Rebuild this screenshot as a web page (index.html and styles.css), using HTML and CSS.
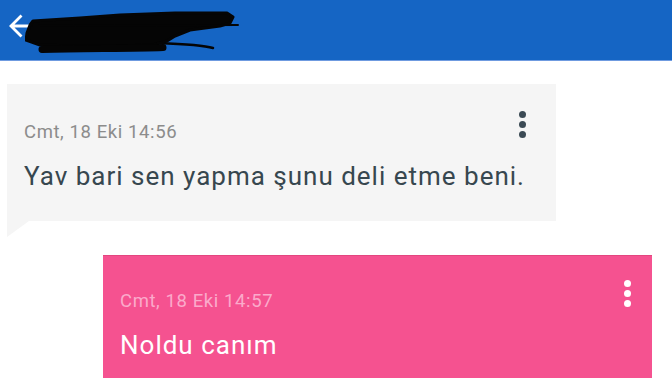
FILE: index.html
```html
<!DOCTYPE html>
<html>
<head>
<meta charset="utf-8">
<link rel="stylesheet" href="styles.css">
</head>
<body>
<header class="topbar">
  <svg class="back" width="28" height="28" viewBox="0 0 28 28"><path d="M27 14H4M14.5 3.5L4 14l10.5 10.5" fill="none" stroke="#fff" stroke-width="2.8"/></svg>
  <svg class="redact" width="215" height="50" viewBox="0 0 215 50">
    <path d="M8 13 L55 10 L95 7 L150 5 L202 5 L208 9 L205 15 L195 18 L165 22 L150 28 L142 33 L128 37 L90 38 L50 38 L15 37 L1 32 L2 25 L5 17 Z" fill="#050505" stroke="#050505" stroke-width="3" stroke-linejoin="round"/>
    <path d="M8 18 L213 17" fill="none" stroke="#050505" stroke-width="2" stroke-linecap="round"/>
    <path d="M17 41.5 C60 40.5 110 40.5 138 39.5" fill="none" stroke="#050505" stroke-width="7" stroke-linecap="round"/>
    <path d="M133 35 C160 36 178 37 188 40" fill="none" stroke="#050505" stroke-width="2.5" stroke-linecap="round"/>
  </svg>
</header>
<main class="chat">
  <div class="msg incoming">
    <div class="bubble">
      <div class="body">
        <div class="time">Cmt, 18 Eki 14:56</div>
        <div class="text">Yav bari sen yapma şunu deli etme beni.</div>
      </div>
      <div class="dots"><span></span><span></span><span></span></div>
    </div>
    <div class="tail"></div>
  </div>
  <div class="msg outgoing">
    <div class="bubble">
      <div class="body">
        <div class="time">Cmt, 18 Eki 14:57</div>
        <div class="text">Noldu canım</div>
      </div>
      <div class="dots"><span></span><span></span><span></span></div>
    </div>
  </div>
</main>
</body>
</html>
```
FILE: styles.css
```css
html, body { margin: 0; padding: 0; }
body {
  width: 672px; height: 378px; overflow: hidden;
  background: #fff;
  font-family: Roboto, "Noto Sans", sans-serif;
}
.topbar {
  height: 61px;
  background: #1565c4;
  border-bottom: 1px solid #6f9be0;
  display: flex; align-items: flex-start;
  padding-left: 7px;
  box-sizing: border-box;
}
.back { margin-top: 12px; }
.redact { margin-left: -10px; margin-top: 8px; }
.chat { display: flex; flex-direction: column; padding-top: 23px; }
.msg { width: 549px; }
.incoming { margin-left: 7px; }
.outgoing { margin-left: 103px; margin-top: 18px; }
.bubble {
  display: flex; justify-content: space-between;
  box-sizing: border-box;
}
.incoming .bubble { background: #f5f5f5; height: 137px; padding: 27px 30px 0 17px; }
.outgoing .bubble { background: #f55290; border-top: 1px solid #e3467f; height: 123px; padding: 24px 21px 0 17px; }
.body { padding-top: 10px; flex: 1; min-width: 0; white-space: nowrap; }
.time { font-size: 18.5px; line-height: 22px; letter-spacing: 0.6px; }
.text { font-size: 26px; line-height: 30px; letter-spacing: 1px; margin-top: 18px; }
.incoming .time { color: #8c8c8c; }
.incoming .text { color: #37474f; }
.outgoing .time { color: #fbaacb; }
.outgoing .text { color: #fff; }
.dots { display: flex; flex-direction: column; gap: 3px; }
.dots span { width: 7px; height: 7px; border-radius: 50%; }
.incoming .dots span { background: #3b4a54; }
.outgoing .dots span { background: #fff; }
.tail {
  width: 22px; height: 16px;
  background: #f5f5f5;
  clip-path: polygon(0 0, 100% 0, 0 100%);
}
```
